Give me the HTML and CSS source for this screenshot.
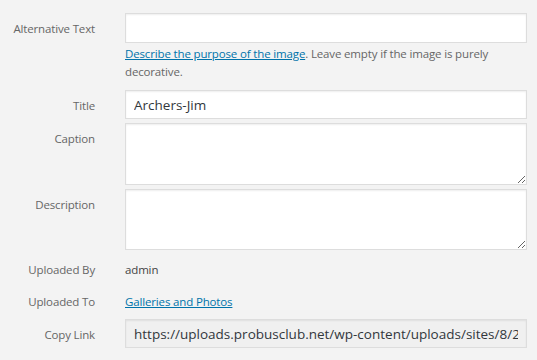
FILE: index.html
```html
<!DOCTYPE html>
<html lang="en">
<head>
  <meta charset="UTF-8">
  <title>Attachment Details</title>
  <link rel="stylesheet" href="styles.css">
</head>
<body>
  <div class="settings">
    <div class="setting setting-alt">
      <label class="name" for="alt-text">Alternative Text</label>
      <div class="field">
        <input type="text" id="alt-text" class="input">
        <p class="description"><a href="#">Describe the purpose of the image</a>. Leave empty if the image is purely decorative.</p>
      </div>
    </div>

    <div class="setting setting-title">
      <label class="name" for="title">Title</label>
      <div class="field">
        <input type="text" id="title" class="input" value="Archers-Jim">
      </div>
    </div>

    <div class="setting setting-caption">
      <label class="name" for="caption">Caption</label>
      <div class="field">
        <textarea id="caption" class="textarea"></textarea>
      </div>
    </div>

    <div class="setting setting-desc">
      <label class="name" for="description">Description</label>
      <div class="field">
        <textarea id="description" class="textarea textarea-short"></textarea>
      </div>
    </div>

    <div class="setting setting-text setting-by">
      <span class="name">Uploaded By</span>
      <span class="value">admin</span>
    </div>

    <div class="setting setting-text setting-to">
      <span class="name">Uploaded To</span>
      <span class="value"><a href="#">Galleries and Photos</a></span>
    </div>

    <div class="setting setting-copy">
      <label class="name" for="copy-link">Copy Link</label>
      <div class="field">
        <input type="text" id="copy-link" class="input input-readonly" readonly value="https://uploads.probusclub.net/wp-content/uploads/sites/8/2019/05/Archers-Jim.jpg">
      </div>
    </div>
  </div>
</body>
</html>
```

FILE: styles.css
```css
body {
  margin: 0;
  background-color: #f3f3f3;
  font-family: "Open Sans", "Noto Sans", sans-serif;
  color: #444;
}

.settings {
  padding: 0 10px 0 0;
}

.setting {
  display: grid;
  grid-template-columns: 95px 1fr;
  column-gap: 30px;
  align-items: start;
}

.name {
  text-align: right;
  font-size: 11.5px;
  letter-spacing: -0.15px;
  line-height: 18px;
  color: #666;
  padding-top: 7px;
  white-space: nowrap;
}

.field {
  min-width: 0;
}

.input,
.textarea {
  display: block;
  box-sizing: border-box;
  width: 100%;
  margin: 0;
  border: 1px solid #ddd;
  border-radius: 0;
  background-color: #fff;
  box-shadow: inset 0 1px 2px rgba(0, 0, 0, 0.07);
  font-family: "Open Sans", "Noto Sans", sans-serif;
  font-size: 13.5px;
  color: #32373c;
  outline: none;
}

.input {
  height: 29px;
  padding: 0 8px;
}

.input-readonly {
  background-color: #f0f0f0;
}

.textarea {
  height: 62px;
  padding: 6px 8px;
  resize: vertical;
}

.textarea-short {
  height: 61px;
}

.description {
  margin: 2px 0 0;
  font-size: 11.5px;
  letter-spacing: -0.15px;
  line-height: 18px;
  color: #666;
}

a {
  color: #0073aa;
}

.setting-alt {
  margin-top: 13px;
}

.setting-alt .input {
  height: 30px;
}

.setting-title {
  margin-top: 9px;
}

.setting-caption {
  margin-top: 4px;
}

.setting-desc {
  margin-top: 4px;
}

.setting-text .name {
  padding-top: 0;
}

.setting-text .value {
  font-size: 11.5px;
  letter-spacing: -0.15px;
  line-height: 18px;
}

.setting-by {
  margin-top: 11px;
}

.setting-to {
  margin-top: 14px;
}

.setting-copy {
  margin-top: 8px;
}
```
